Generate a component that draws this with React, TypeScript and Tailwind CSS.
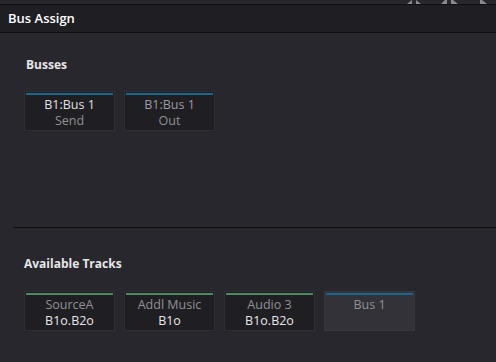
import type { ReactNode } from 'react';

interface BusCardProps {
  bar: 'blue' | 'green';
  top: string;
  bottom?: string;
  topClass: string;
  bottomClass?: string;
  muted?: boolean;
}

const BusCard = ({ bar, top, bottom, topClass, bottomClass, muted }: BusCardProps) => (
  <div
    className={`w-[91px] h-[40px] border p-px flex flex-col ${
      muted ? 'bg-[#333238] border-[#38373d]' : 'bg-[#1f1e22] border-[#2f2e34]'
    }`}
  >
    <div className={`h-[2px] ${bar === 'blue' ? 'bg-[#1b6a8e]' : 'bg-[#4b8a5e]'}`} />
    <div className="flex flex-col items-center pt-[2px] text-[12.5px] leading-[16px]">
      <span className={topClass}>{top}</span>
      {bottom && <span className={bottomClass}>{bottom}</span>}
    </div>
  </div>
);

const SectionTitle = ({ children, className }: { children: ReactNode; className?: string }) => (
  <div className={`text-[12px] leading-[16px] font-bold text-[#e6e6e8] ${className ?? ''}`}>
    {children}
  </div>
);

export default function App() {
  return (
    <div
      className="w-[496px] h-[362px] bg-[#28272d] overflow-hidden flex flex-col"
      style={{ fontFamily: '"Open Sans", "Noto Sans", sans-serif' }}
    >
      {/* top strip with cut-off toolbar icons */}
      <div className="h-[4px] bg-[#28272c] relative">
        <svg className="absolute left-[404px] top-0" width="92" height="4" viewBox="0 0 92 4">
          <polygon points="3,4 8,0 8,4" fill="#8a8a8e" />
          <polygon points="12,0 17,4 12,4" fill="#8a8a8e" />
          <polygon points="37,4 41,0 43,0 43,4" fill="#8a8a8e" />
          <polygon points="47,0 49,0 54,4 47,4" fill="#8a8a8e" />
          <polygon points="76,0 78,0 83,4 76,4" fill="#8a8a8e" />
        </svg>
      </div>
      <div className="h-px bg-[#0e0e10]" />

      {/* header */}
      <div className="h-[28px] bg-[#1f1e23] px-2 flex items-center border-b border-[#0e0e10]">
        <span className="text-[13px] font-semibold text-white">Bus Assign</span>
      </div>

      {/* busses */}
      <div className="h-[195px] pt-[24px] border-b border-[#0f0f11] ml-[13px]">
        <SectionTitle className="ml-[13px]">Busses</SectionTitle>
        <div className="flex gap-[9px] mt-[18px] ml-[11px]">
          <BusCard bar="blue" top="B1:Bus 1" bottom="Send" topClass="text-[#e0e0e2]" bottomClass="text-[#909095]" />
          <BusCard bar="blue" top="B1:Bus 1" bottom="Out" topClass="text-[#9c9ca2]" bottomClass="text-[#909095]" />
        </div>
      </div>

      {/* available tracks */}
      <div className="pt-[28px] px-6">
        <SectionTitle>Available Tracks</SectionTitle>
        <div className="flex gap-[9px] mt-[19px]">
          <BusCard bar="green" top="SourceA" bottom="B1o.B2o" topClass="text-[#919197]" bottomClass="text-[#e6e6e8]" />
          <BusCard bar="green" top="Addl Music" bottom="B1o" topClass="text-[#919197]" bottomClass="text-[#e6e6e8]" />
          <BusCard bar="green" top="Audio 3" bottom="B1o.B2o" topClass="text-[#919197]" bottomClass="text-[#e6e6e8]" />
          <BusCard bar="blue" top="Bus 1" topClass="text-[#919197]" muted />
        </div>
      </div>
    </div>
  );
}
